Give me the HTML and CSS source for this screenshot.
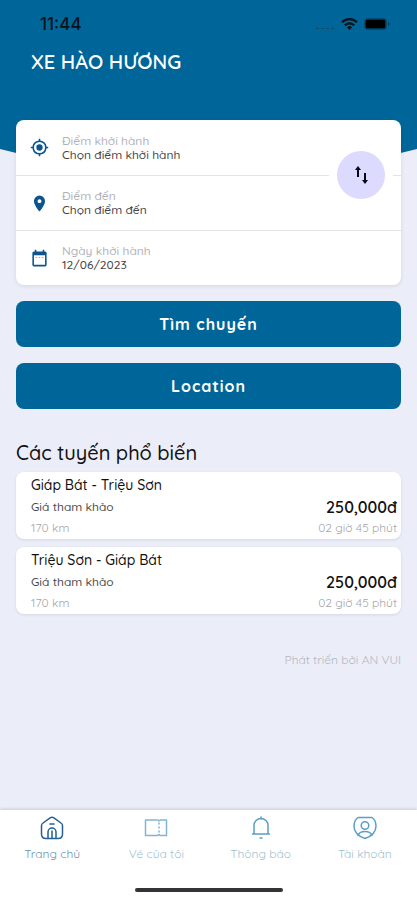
FILE: index.html
```html
<!DOCTYPE html>
<html lang="vi">
<head>
<meta charset="utf-8">
<meta name="viewport" content="width=device-width, initial-scale=1">
<title>XE HÀO HƯƠNG</title>
<link rel="stylesheet" href="styles.css">
</head>
<body>
<div class="app">
  <header class="hero">
    <div class="status">
      <span class="time">11:44</span>
      <span class="signals">
        <svg width="20" height="14" viewBox="0 0 20 14" class="dots"><path d="M1 11.500h3M6 11.500h3M11 11.500h3M16 11.500h3"/></svg>
        <svg width="17" height="14" viewBox="0 0 17 14"><g fill="none" stroke="currentColor" stroke-width="2.2"><path d="M1 5.2a10.8 10.8 0 0 1 15 0"/><path d="M3.800 8.200a6.800 6.800 0 0 1 9.400 0"/></g><path d="M8.500 13 5.900 10.300a3.800 3.800 0 0 1 5.200 0Z"/></svg>
        <svg width="26" height="14" viewBox="0 0 26 14"><rect x=".5" y="1.500" width="22" height="11" rx="3" fill="none" stroke="currentColor" opacity=".3"/><rect x="1.500" y="2.500" width="20" height="9" rx="1.500" fill="#000"/><path d="M24 5v4c2-.8 2-3.200 0-4Z" opacity=".5"/></svg>
      </span>
    </div>
    <h1>XE HÀO HƯƠNG</h1>
  </header>

  <main>
    <section class="search">
      <button class="field" type="button">
        <svg class="field-icon" viewBox="0 0 24 24"><path d="M12 8a4 4 0 1 0 0 8 4 4 0 0 0 0-8Zm8.940 3A8.990 8.990 0 0 0 13 3.060V1h-2v2.060A8.990 8.990 0 0 0 3.060 11H1v2h2.060A8.990 8.990 0 0 0 11 20.940V23h2v-2.060A8.990 8.990 0 0 0 20.940 13H23v-2h-2.060ZM12 19a7 7 0 1 1 0-14 7 7 0 0 1 0 14Z"/></svg>
        <span class="field-text"><span class="label">Điểm khởi hành</span><span class="value">Chọn điểm khởi hành</span></span>
      </button>
      <button class="field" type="button">
        <svg class="field-icon" viewBox="0 0 24 24"><path d="M12 2a7 7 0 0 0-7 7c0 5.250 7 13 7 13s7-7.750 7-13a7 7 0 0 0-7-7Zm0 9.500a2.500 2.500 0 1 1 0-5 2.500 2.500 0 0 1 0 5Z"/></svg>
        <span class="field-text"><span class="label">Điểm đến</span><span class="value">Chọn điểm đến</span></span>
      </button>
      <button class="field" type="button">
        <svg class="field-icon" viewBox="0 0 24 24"><path d="M19 3h-1V1h-2v2H8V1H6v2H5a2 2 0 0 0-2 2v15a2 2 0 0 0 2 2h14a2 2 0 0 0 2-2V5a2 2 0 0 0-2-2Zm0 17H5V8h14v12Z"/><path d="M7 10.500h2v1H7Zm4 0h2v1h-2Zm4 0h2v1h-2Z" opacity=".6"/></svg>
        <span class="field-text"><span class="label">Ngày khởi hành</span><span class="value">12/06/2023</span></span>
      </button>
      <button class="swap" type="button" aria-label="Đổi chiều">
        <svg width="16" height="20" viewBox="0 0 16 20"><g fill="none" stroke="#080810" stroke-width="2"><path d="M5 12V3"/><path d="M12 8v9"/></g><path d="M5 1 8 5H2ZM12 19 9 15h6Z" fill="#080810"/></svg>
      </button>
    </section>

    <div class="actions">
      <button class="primary" type="button">Tìm chuyến</button>
      <button class="primary" type="button">Location</button>
    </div>

    <section class="popular">
      <h2>Các tuyến phổ biến</h2>
      <article class="route">
        <h3>Giáp Bát - Triệu Sơn</h3>
        <div class="line"><span class="note">Giá tham khảo</span><strong>250,000đ</strong></div>
        <div class="line meta"><span>170 km</span><span>02 giờ 45 phút</span></div>
      </article>
      <article class="route">
        <h3>Triệu Sơn - Giáp Bát</h3>
        <div class="line"><span class="note">Giá tham khảo</span><strong>250,000đ</strong></div>
        <div class="line meta"><span>170 km</span><span>02 giờ 45 phút</span></div>
      </article>
    </section>
    <p class="credit">Phát triển bởi AN VUI</p>
  </main>

  <footer class="dock">
    <nav>
      <a href="#home" class="active" aria-current="page">
        <svg viewBox="0 0 24 24"><path d="M1.500 9.500Q1.500 8 3 7L10.500 1.700q1.500-1 3 0L21 7q1.500 1 1.500 2.500V18q0 4.500-4.500 4.500H6q-4.500 0-4.500-4.500Z"/><path d="M8 22v-6a4 4 0 0 1 8 0v6M12 15v7M10 8h4"/></svg>
        <span>Trang chủ</span>
      </a>
      <a href="#tickets">
        <svg viewBox="0 0 24 24" class="faint"><path d="M1.500 4H14q1 2 2 0h6.500v15.500H16q-1-2-2 0H1.500Z"/><path d="M15 7v10" stroke-dasharray="1 3"/></svg>
        <span>Vé của tôi</span>
      </a>
      <a href="#alerts">
        <svg viewBox="0 0 24 24"><path d="M12 1v2M5 17.500V9.500a7 7 0 0 1 14 0v8M3.500 18h17M11 22h2"/></svg>
        <span>Thông báo</span>
      </a>
      <a href="#account">
        <svg viewBox="0 0 24 24"><path d="M5 1.500h14q4 3 4 8.500c0 6-4 10-11 12.500C5 20 1 16 1 10q0-5.500 4-8.500Z"/><circle cx="12" cy="9.500" r="3.800"/><path d="M5 19.500c1-3 4-4 7-4s6 1 7 4"/></svg>
        <span>Tài khoản</span>
      </a>
    </nav>
    <div class="home-bar"></div>
  </footer>
</div>
</body>
</html>
```

FILE: styles.css
```css
* { box-sizing: border-box; }

body {
  margin: 0;
  background: #ebeef8;
  color: #111;
  font-family: Quicksand, Inter, "Noto Sans", sans-serif;
}

button {
  border: 0;
  padding: 0;
  font: inherit;
  color: inherit;
  cursor: pointer;
}

h1, h2, h3, p { margin: 0; }

.app {
  min-height: 100vh;
  display: flex;
  flex-direction: column;
}

/* Blue header whose lower edge dips towards the middle */
.hero {
  height: 200px;
  padding: 14px 27px 0 31px;
  background: #006699;
  clip-path: polygon(0 0, 100% 0, 100% 149px, 50% 100%, 0 149px);
}

.status {
  display: flex;
  justify-content: space-between;
  align-items: center;
  height: 20px;
  padding-left: 9px;
  color: #0b1218;
}

.time { font-family: Inter, sans-serif; font-size: 17px; font-weight: 500; }

.signals { display: flex; align-items: center; gap: 6px; }
.signals svg { fill: currentColor; }
.signals .dots { stroke: #124766; stroke-width: 1; }

h1 {
  margin-top: 16px;
  color: #fff;
  font-size: 20px;
  line-height: 24px;
  font-weight: 600;
}

main {
  flex: 1;
  margin-top: -80px;
  padding: 0 16px;
}

.search {
  position: relative;
  background: #fff;
  border-radius: 8px;
  box-shadow: 0 1px 4px #0000001a;
}

.field {
  display: flex;
  align-items: center;
  gap: 13px;
  width: 100%;
  height: 55px;
  padding-left: 14px;
  background: none;
  text-align: left;
}

.field + .field { border-top: 1px solid #e4e4e8; }

.field-icon { width: 19px; height: 19px; fill: #0a5590; }

.field-text {
  display: flex;
  flex-direction: column;
  font-size: 12px;
  line-height: 14px;
  font-weight: 500;
}

.label { color: #b0b2b9; }
.value { color: #444448; }

.swap {
  position: absolute;
  top: 31px;
  right: 16px;
  display: grid;
  place-items: center;
  width: 48px;
  height: 48px;
  border-radius: 50%;
  background: #dcdafe;
  box-shadow: 0 0 0 8px #fff;
}

.actions {
  display: grid;
  gap: 16px;
  margin-top: 16px;
}

.primary {
  height: 46px;
  border-radius: 8px;
  background: #006699;
  color: #fff;
  font-size: 16px;
  line-height: 20px;
  font-weight: 700;
  letter-spacing: 1px;
}

.popular {
  display: grid;
  gap: 8px;
  margin-top: 32px;
}

h2 {
  margin-bottom: -1px;
  font-size: 20px;
  line-height: 24px;
  font-weight: 500;
}

.route {
  padding: 3px 4px 3px 15px;
  border-radius: 8px;
  background: #fff;
  box-shadow: 0 1px 3px #0000001a;
}

h3 {
  font-size: 14px;
  line-height: 20px;
  font-weight: 500;
}

.line {
  display: flex;
  justify-content: space-between;
  align-items: center;
  font-size: 12px;
  line-height: 24px;
  font-weight: 500;
}

.line strong { font-size: 16px; font-weight: 600; }
.note { color: #4a4a4a; }

.meta { color: #a6a6aa; font-weight: 400; line-height: 17px; }

.credit {
  margin-top: 38px;
  color: #b4b7c0;
  font-size: 12px;
  line-height: 16px;
  text-align: right;
}

.dock {
  padding: 6px 0 8px;
  background: #fff;
  box-shadow: 0 -1px 3px #00000026;
}

nav {
  display: grid;
  grid-template-columns: repeat(4, 1fr);
}

nav a {
  display: flex;
  flex-direction: column;
  align-items: center;
  gap: 6px;
  color: #a4bfd0;
  font-size: 12px;
  line-height: 16px;
  text-decoration: none;
}

nav svg {
  width: 24px;
  height: 24px;
  fill: none;
  stroke: #5b9fc6;
  stroke-width: 1.5;
  stroke-linecap: round;
  stroke-linejoin: round;
}

nav .faint { stroke: #83b5d0; }
nav .active { color: #6d94b3; }
nav .active svg { stroke: #235f94; }

.home-bar {
  width: 148px;
  height: 4px;
  margin: 26px auto 0;
  border-radius: 2px;
  background: #353337;
}
```
